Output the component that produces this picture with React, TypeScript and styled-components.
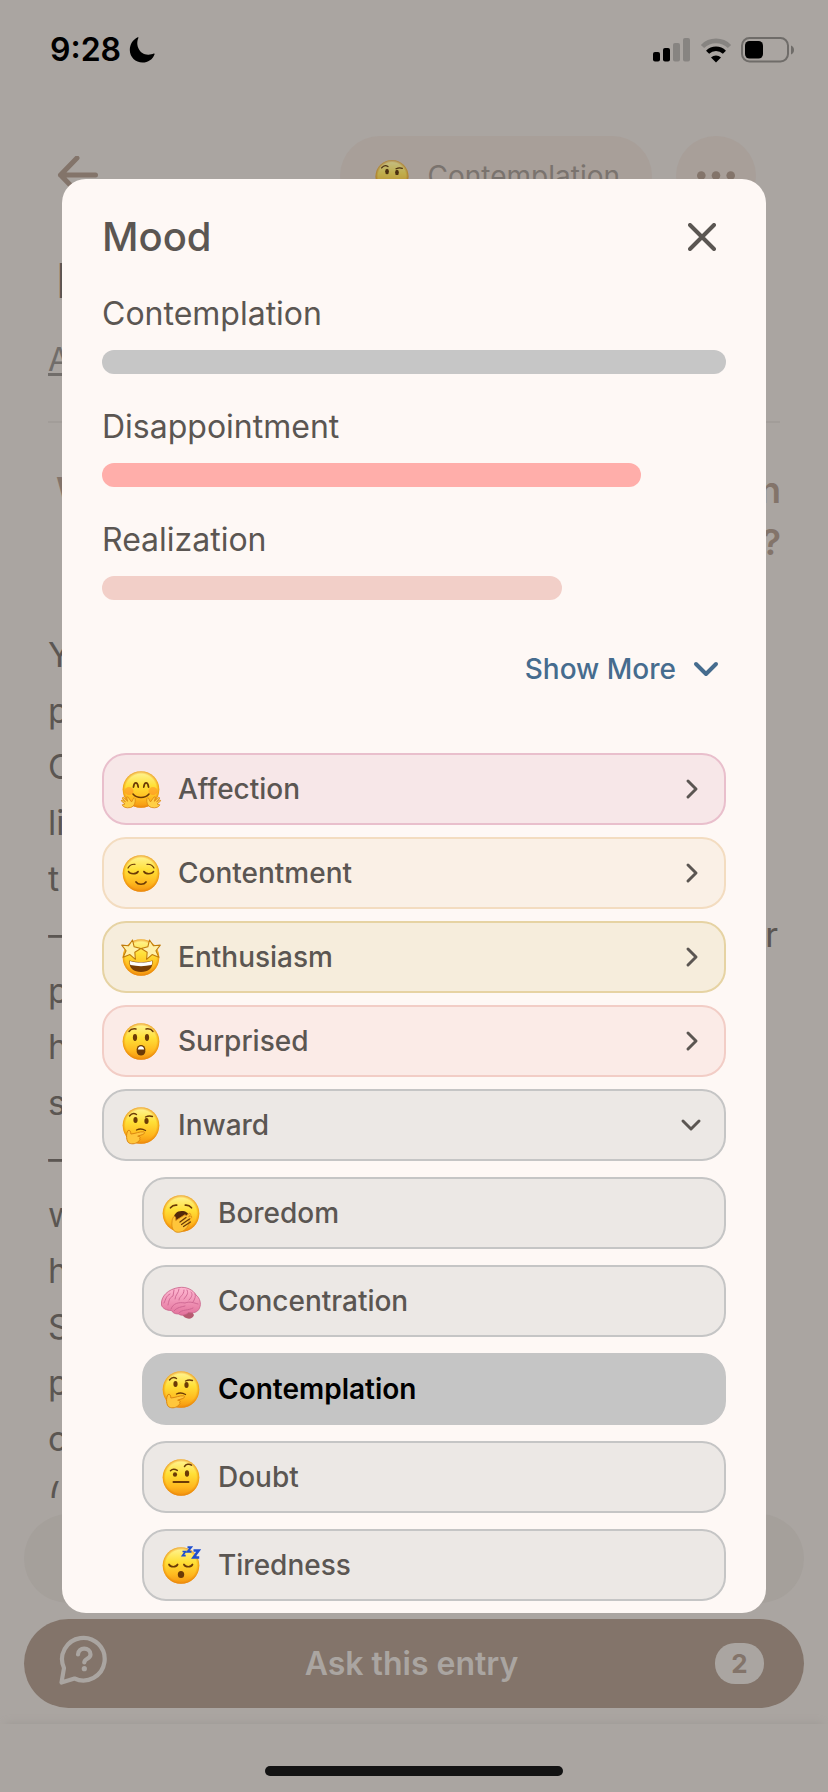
import React, { useId } from "react";
import styled, { createGlobalStyle } from "styled-components";

const color = {
  page: "#aaa5a1",
  ink: "#5b5652",
  brown: "#83746a",
  pill: "#a89f99",
  sheet: "#fef8f5",
  link: "#466c8e",
};

const GlobalStyle = createGlobalStyle`
  * { box-sizing: border-box; }
  body { margin: 0; background: ${color.page}; }
  button { font: inherit; color: inherit; border: 0; background: none; padding: 0; cursor: pointer; }
  svg { display: block; flex: none; }
`;

/* ---------- page behind the dialog ---------- */

const Screen = styled.div`
  position: relative;
  min-height: 100vh;
  font-family: Inter, "Liberation Sans", sans-serif;
  color: ${color.ink};
`;

const Page = styled.div`
  display: flex;
  flex-direction: column;
  height: 100vh;
  background: ${color.page};
`;

const StatusBar = styled.div`
  display: flex;
  align-items: center;
  justify-content: space-between;
  height: 100px;
  padding: 0 34px 0 50px;
  color: #000;
`;

const StatusGroup = styled.div<{ $gap: number }>`
  display: flex;
  align-items: center;
  gap: ${(p) => p.$gap}px;
`;

const Clock = styled.span`
  font-size: 32px;
  font-weight: 600;
  line-height: 40px;
`;

const EntryNav = styled.nav`
  display: flex;
  align-items: center;
  gap: 24px;
  height: 80px;
  margin: 36px 72px 0 56px;
`;

const BackButton = styled.button`
  margin-right: auto;
`;

const MoodPill = styled.button`
  display: flex;
  align-items: center;
  gap: 18px;
  height: 80px;
  padding: 0 32px 0 34px;
  border-radius: 40px;
  background: ${color.pill};
  color: #7a736e;
  font-size: 28px;
`;

const MoreButton = styled.button`
  display: grid;
  place-items: center;
  width: 80px;
  height: 80px;
  border-radius: 40px;
  background: ${color.pill};
`;

const DimmedIcon = styled.span`
  filter: brightness(0.78) saturate(0.75);
`;

const EntryTitle = styled.h1`
  margin: 36px 56px 0;
  font-size: 48px;
  font-weight: 500;
  line-height: 58px;
`;

const EntryLink = styled.a`
  align-self: flex-start;
  margin: 30px 48px 0;
  color: #716d6a;
  font-size: 32px;
  line-height: 40px;
  text-decoration-thickness: 3px;
  text-underline-offset: 2px;
  text-decoration-skip-ink: none;
`;

const Rule = styled.hr`
  width: calc(100% - 96px);
  margin: 41px 48px 0;
  border: 0;
  border-top: 2px solid #a29d99;
`;

const Question = styled.h2`
  display: flex;
  flex-direction: column;
  margin: 41px 47px 59px 56px;
  color: ${color.brown};
  font-size: 36px;
  font-weight: 600;
  line-height: 52px;
`;

const Line = styled.span<{ $end?: boolean }>`
  display: flex;
  justify-content: ${(p) => (p.$end ? "flex-end" : "space-between")};
`;

const EntryBody = styled.p`
  flex: 1;
  min-height: 0;
  overflow: hidden;
  margin: 0 50px 0 48px;
  font-size: 34px;
  line-height: 56px;
`;

const Composer = styled.div`
  flex: none;
  height: 89px;
  margin: 16px 24px;
  border-radius: 45px;
  background: #a5a09b;
`;

const AskButton = styled.button`
  display: grid;
  flex: none;
  grid-template-columns: 49px 1fr 49px;
  align-items: center;
  height: 89px;
  margin: 0 24px;
  padding: 0 40px 0 35px;
  border-radius: 45px;
  background: ${color.brown};
  color: ${color.page};
  font-size: 32px;
  font-weight: 600;
`;

const AskIcon = styled.span`
  align-self: start;
  margin-top: 16px;
`;

const Count = styled.span`
  display: grid;
  place-items: center;
  height: 41px;
  border-radius: 20px;
  background: ${color.page};
  color: ${color.brown};
  font-size: 26px;
  font-weight: 700;
`;

const HomeArea = styled.footer`
  display: flex;
  flex: none;
  justify-content: center;
  align-items: flex-end;
  height: 68px;
  margin-top: 16px;
  padding-bottom: 16px;
  box-shadow: 0 -6px 8px -6px #9d9894;
`;

const HomeIndicator = styled.div`
  width: 36%;
  height: 10px;
  border-radius: 5px;
  background: #131313;
`;

/* ---------- dialog ---------- */

const Overlay = styled.div`
  position: absolute;
  inset: 0;
  padding: 179px 62px;
`;

const Sheet = styled.section`
  padding: 34px 40px 12px;
  border-radius: 24px;
  background: ${color.sheet};
`;

const SheetHeader = styled.header`
  display: flex;
  align-items: center;
  justify-content: space-between;
  height: 48px;
`;

const SheetTitle = styled.h2`
  margin: 0;
  font-size: 40px;
  font-weight: 500;
  line-height: 48px;
`;

const CloseButton = styled.button`
  display: grid;
  place-items: center;
  width: 48px;
  height: 48px;
`;

const Scores = styled.div`
  display: flex;
  flex-direction: column;
  gap: 33px;
  margin-top: 33px;
`;

const Score = styled.div`
  display: flex;
  flex-direction: column;
  gap: 16px;
  font-size: 32px;
  line-height: 40px;
`;

const ScoreBar = styled.div<{ $tone: string }>`
  height: 24px;
  border-radius: 12px;
  background: ${(p) => p.$tone};
`;

const ShowMore = styled.button`
  display: flex;
  align-items: center;
  gap: 16px;
  height: 56px;
  margin: 41px 6px 56px auto;
  color: ${color.link};
  font-size: 28px;
  font-weight: 500;
`;

const OptionList = styled.ul<{ $nested?: boolean }>`
  display: flex;
  flex-direction: column;
  gap: ${(p) => (p.$nested ? 16 : 12)}px;
  margin: ${(p) => (p.$nested ? "16px 0 0 40px" : "0")};
  padding: 0;
  list-style: none;
`;

const Option = styled.button<{ $fill: string; $edge: string; $selected?: boolean }>`
  display: flex;
  align-items: center;
  gap: 17px;
  width: 100%;
  height: 72px;
  padding: 0 21px 0 17px;
  border: 2px solid ${(p) => p.$edge};
  border-radius: 24px;
  background: ${(p) => p.$fill};
  color: ${(p) => (p.$selected ? "#000" : color.ink)};
  font-size: 28px;
  font-weight: ${(p) => (p.$selected ? 600 : 500)};
`;

const OptionName = styled.span`
  flex: 1;
  text-align: left;
`;

/* ---------- emoji ---------- */

type Mood = "hug" | "calm" | "star" | "wow" | "think" | "yawn" | "brain" | "doubt" | "sleep";
const dark = "#6b3a06";

const eye = (cx: number, cy: number, ry = 3) => <ellipse cx={cx} cy={cy} rx="2.1" ry={ry} fill={dark} />;
const stroke = (d: string, w = 1.5, c = dark) => (
  <path d={d} fill="none" stroke={c} strokeWidth={w} strokeLinecap="round" strokeLinejoin="round" />
);
const starPath = "M0-7.2 2.1-2.4 7.2-2 3.3 1.5 4.6 6.6 0 3.8-4.6 6.6-3.3 1.5-7.2-2-2.1-2.4Z";

function features(mood: Mood) {
  switch (mood) {
    case "hug":
      return (
        <>
          <ellipse cx="8" cy="22" rx="4.5" ry="4" fill="#ff6a1c" opacity=".35" />
          <ellipse cx="32" cy="22" rx="4.5" ry="4" fill="#ff6a1c" opacity=".35" />
          {stroke("M12.5 18c.7-5.4 4-5.4 4.7 0M22.8 18c.7-5.4 4-5.4 4.7 0", 1.8)}
          {stroke("M12 25c4 4.6 12 4.6 16 0", 1.6)}
          {[false, true].map((flip) => (
            <g key={String(flip)} transform={flip ? "translate(40 0) scale(-1 1)" : undefined}>
              <path
                d="M9.5 38.5C5 39.5 2 38 1.2 35.8L4 35 .2 31.8l.8-1 3.4 2L1.2 29l1-.9 4.4 4.2-1-4 1.3-.4 3.6 5c1.2-1 1.4-3.8 2.7-4.2 1.4.6 1.2 3.5.6 5.5-.6 2-2 3.7-4.3 4.3Z"
                fill="#ffcf45"
                stroke="#d98510"
                strokeWidth=".8"
              />
            </g>
          ))}
        </>
      );
    case "calm":
      return (
        <>
          {stroke("M7 15c1.3-2.3 4-4 7-3.700M33 15c-1.300-2.300-4-4-7-3.700", 1.2)}
          {stroke("M7.500 18.500c1.500 3 8 3 9.600 0M22.900 18.500c1.600 3 8.100 3 9.600 0", 1.6)}
          {stroke("M15 29c2 3 8 3 10 0", 1.7)}
        </>
      );
    case "star":
      return (
        <>
          <path d="M8.5 23.500c7 2.2 16 2.2 23 0 .8 8-4.5 11.500-11.5 11.5S7.700 31.500 8.500 23.500Z" fill="#7a3f05" />
          <path d="M9 24c7 2 15 2 22 0 .3 1.700.1 3-.5 4-7 1.500-14 1.500-21 0-.6-1-.8-2.300-.5-4Z" fill="#fff" />
          <g fill="#fff0a8" stroke="#c07b0a" strokeWidth=".8" strokeLinejoin="round">
            <path d={starPath} transform="translate(9.800 12.500) rotate(10) scale(1.350)" />
            <path d={starPath} transform="translate(30.200 12.500) rotate(-10) scale(1.350)" />
          </g>
        </>
      );
    case "wow":
      return (
        <>
          {stroke("M8 10.500c1.500-2 4.500-3 7-2.500M32 10.500c-1.500-2-4.500-3-7-2.500", 1.4)}
          {eye(14, 16.5, 3.4)}
          {eye(26, 16.5, 3.4)}
          <rect x="15.700" y="24" width="8.600" height="10.500" rx="4.300" fill={dark} />
          <path d="M16.800 28.500c.5-4.500 5.900-4.500 6.400 0Z" fill="#fff" />
        </>
      );
    case "think":
      return (
        <>
          {stroke("M8.500 11c2-2.600 4.500-3.200 7-1.500M24.500 12c2.500-1.300 4.500-1.500 7-.5", 1.4)}
          {eye(14.5, 15)}
          {eye(25.5, 16)}
          {stroke("M15.500 25c3-1.600 6-1.400 9 .5", 1.4)}
          <path
            d="M7 25.500c1.800-.8 2.700.7 2.900 3.500 4-.2 9-2.700 12.800-2.200 1.600.8.4 2.500-1.500 2.900l-4.500 1.500c2.500 0 3.100 1.300 1.900 2.300.8.9.2 2-.8 2.500-2.300 2.800-6.500 3.500-9.600 2.100C5.300 36.900 4.600 29 7 25.500Z"
            fill="#ffc63c"
            stroke="#dc8710"
            strokeWidth="1"
          />
        </>
      );
    case "yawn":
      return (
        <>
          {stroke("M9.500 14.800c1.500-1.800 4-2.800 6.200-2.600M30.500 14.800c-1.500-1.800-4-2.800-6.200-2.600", 1.7)}
          <path d="M12.500 28c-.5-7 3.500-10 8-10s7 2 7 5l-6 8Z" fill="#54290a" />
          <path
            d="M11 29c0-3 1.500-6 3-5.500 1 .8.500 2.500.8 4l9.200-5.800 1.200 1 3.500-2.600 1 1.300-2.200 2.500 2.900-1 .4 1.500-2.800 2.600.2 3c-1.500 6-7.500 10.500-13.200 9-3.700-1.500-4.500-6-4-10Z"
            fill="#ffc53a"
            stroke="#dc8d13"
            strokeWidth=".9"
          />
          {stroke("M19 29l6-4.500M20.500 31.500l8-5.500M22.500 33.500l7-4.500", 1.3)}
        </>
      );
    case "doubt":
      return (
        <>
          {stroke("M9.500 13.700c1.800-1.800 4.500-1.600 6.800-.3M23.500 9.500c1.500-2.300 4.500-3 7-1.300", 1.5)}
          {eye(14, 17.5, 2.3)}
          {eye(26, 16.5, 3.2)}
          {stroke("M12.500 25h15", 2)}
        </>
      );
    case "sleep":
      return (
        <>
          {stroke("M8 19.500c1.500 3 7 3 8.600 0M22.900 19.500c1.600 3 7.100 3 8.600 0", 1.7)}
          <ellipse cx="20" cy="29.500" rx="3.200" ry="3.500" fill={dark} />
          <g fill="none" stroke="#1f4fd0">
            <path d="M21.500 6.500h3l-3 4.200h3.200" strokeWidth="1.700" />
            <path d="M26.500 2.200h3.700l-3.700 4.600h4" strokeWidth="1.900" />
            <path d="M32.500 5.500h5.200l-5.200 7h5.700" strokeWidth="2.500" />
          </g>
        </>
      );
    default:
      return null;
  }
}

function Emoji({ mood, size = 40 }: { mood: Mood; size?: number }) {
  const id = useId();
  return (
    <svg width={size} height={size} viewBox="0 0 40 40" aria-hidden="true" overflow="visible">
      <defs>
        <linearGradient id={`${id}f`} x1="0" y1="0" x2="0" y2="1">
          <stop offset="0" stopColor="#fff59a" />
          <stop offset=".4" stopColor="#ffe037" />
          <stop offset=".75" stopColor="#ffb91f" />
          <stop offset="1" stopColor="#f3930f" />
        </linearGradient>
        <radialGradient id={`${id}e`}>
          <stop offset=".84" stopColor="#f08c0a" stopOpacity="0" />
          <stop offset="1" stopColor="#e37f08" stopOpacity=".7" />
        </radialGradient>
        <linearGradient id={`${id}b`} x1="0" y1="0" x2="0" y2="1">
          <stop offset="0" stopColor="#ffb9d2" />
          <stop offset="1" stopColor="#e2719b" />
        </linearGradient>
      </defs>
      {mood === "brain" ? (
        <g transform="translate(0 2)">
          <path d="M21 31c2 5 10 7 12 1l-3-5Z" fill="#b65a70" />
          <path
            d="M.5 22C-.5 13.500 7 6 18 4.500c7-1 14 2 17 7.500 4 3 5.500 9 3.500 13-1.500 4.500-7 5.500-11 4.500-3 3-7 3.500-10 1.500-4 0-6-1.500-7-3.500-5 0-9-2-10-5.500Z"
            fill={`url(#${id}b)`}
            stroke="#c86088"
            strokeWidth=".8"
          />
          {stroke(
            "M3 20c2-4 2-7 6-9M7 22c1-4 1-7 5-9l1-6M14 16c0-4 4-6 4-10M18 17c0-4 5-4 5-10M23 16c2-3 5-5 3-9M28 17c3-3 4-6 2-8M32 19c2-3 3-6 2-8M10 26c2-6 8-7 14-6 5-2 9 0 13 1M13 28c3-4 8-4 11-5M18 30c3-4 9-2 14-5",
            0.9,
            "#cc6490"
          )}
        </g>
      ) : (
        <>
          <circle cx="20" cy="20.500" r="18.300" fill={`url(#${id}f)`} />
          <circle cx="20" cy="20.500" r="18.300" fill={`url(#${id}e)`} />
          {features(mood)}
        </>
      )}
    </svg>
  );
}

/* ---------- line icons ---------- */

function Glyph({ w, h, d, width = 3, tone = "currentColor" }: { w: number; h: number; d: string; width?: number; tone?: string }) {
  return (
    <svg width={w} height={h} viewBox={`0 0 ${w} ${h}`} fill="none" stroke={tone} strokeWidth={width} strokeLinecap="round" strokeLinejoin="round" aria-hidden="true">
      <path d={d} />
    </svg>
  );
}

const scores = [
  { name: "Contemplation", value: 100, tone: "#c6c6c6" },
  { name: "Disappointment", value: 86.4, tone: "#ffaeaa" },
  { name: "Realization", value: 73.7, tone: "#f2cfc8" },
];

const groups: { name: string; mood: Mood; fill: string; edge: string; open?: boolean }[] = [
  { name: "Affection", mood: "hug", fill: "#f7e7e8", edge: "#e9bfcc" },
  { name: "Contentment", mood: "calm", fill: "#faf0e6", edge: "#f3dcc0" },
  { name: "Enthusiasm", mood: "star", fill: "#f6eddc", edge: "#e6d3a3" },
  { name: "Surprised", mood: "wow", fill: "#fbebe7", edge: "#f2cdc6" },
  { name: "Inward", mood: "think", fill: "#ece8e5", edge: "#c5c5c5", open: true },
];

const inward: { name: string; mood: Mood; selected?: boolean }[] = [
  { name: "Boredom", mood: "yawn" },
  { name: "Concentration", mood: "brain" },
  { name: "Contemplation", mood: "think", selected: true },
  { name: "Doubt", mood: "doubt" },
  { name: "Tiredness", mood: "sleep" },
];

const bodyLines = ["Y", "p", "C", "li", "t", "—", "p", "h", "s", "—", "w", "h", "S", "p", "o", "("];

export default function App() {
  return (
    <Screen>
      <GlobalStyle />
      <Page>
        <StatusBar>
          <StatusGroup $gap={8}>
            <Clock>9:28</Clock>
            <svg width="26" height="26" viewBox="0 0 26 26" aria-hidden="true">
              <path d="M9.500.8C6 8 10.500 18 19.500 17.700c2 0 3.700-.5 5.300-1.200.6-.2 1 .2.8.800C23.800 22.500 19 25.600 13.500 25.600 6.500 25.600.8 20 .8 13 .8 7.300 4 2.500 8.700.2c.6-.2 1 .1.800.6Z" />
            </svg>
          </StatusGroup>
          <StatusGroup $gap={9}>
            <svg width="38" height="24" viewBox="0 0 38 24" aria-hidden="true">
              <rect x="0" y="14" width="7" height="9.500" rx="2" />
              <rect x="10" y="10" width="7" height="13.500" rx="2" />
              <rect x="20" y="5" width="7" height="18.500" rx="2" fill="#878481" />
              <rect x="30" y="0" width="7" height="23.500" rx="2" fill="#878481" />
            </svg>
            <svg width="32" height="25" viewBox="0 0 32 25" fill="none" aria-hidden="true">
              <path d="M2.500 8.500A19 19 0 0 1 29.500 8.500" stroke="#878481" strokeWidth="4.600" />
              <path d="M7.600 14.200A12 12 0 0 1 24.400 14.200" stroke="#000" strokeWidth="4.400" />
              <path d="M11 19.500A7.500 7.500 0 0 1 21 19.500L16 24.500Z" fill="#000" />
            </svg>
            <svg width="53" height="26" viewBox="0 0 53 26" aria-hidden="true">
              <rect x="1" y="1" width="46" height="23.500" rx="7.500" fill="none" stroke="#6f6c69" strokeWidth="2" />
              <rect x="4" y="4" width="18" height="17.500" rx="4.500" />
              <path d="M50 8.500c4 1.500 4 7.500 0 9Z" fill="#6f6c69" />
            </svg>
          </StatusGroup>
        </StatusBar>

        <EntryNav>
          <BackButton aria-label="Back">
            <Glyph w={44} h={40} d="M39.500 19H4.500M21 2 4.500 19 21 36" width={5} tone={color.brown} />
          </BackButton>
          <MoodPill>
            <DimmedIcon><Emoji mood="think" size={36} /></DimmedIcon>
            Contemplation
          </MoodPill>
          <MoreButton aria-label="More">
            <svg width="40" height="8" viewBox="0 0 40 8" fill={color.brown} overflow="visible" aria-hidden="true">
              <circle cx="5.300" cy="3.500" r="4.300" />
              <circle cx="20" cy="3.500" r="4.300" />
              <circle cx="34.700" cy="3.500" r="4.300" />
            </svg>
          </MoreButton>
        </EntryNav>
        <EntryTitle>I</EntryTitle>
        <EntryLink href="#">A</EntryLink>
        <Rule />
        <Question>
          <Line><span>W</span><span>n</span></Line>
          <Line $end>?</Line>
        </Question>
        <EntryBody>
          {bodyLines.map((text, i) => (
            <Line key={i}>
              <span>{text}</span>
              {i === 5 && <span>r</span>}
            </Line>
          ))}
        </EntryBody>
        <Composer />
        <AskButton>
          <AskIcon>
            <svg width="50" height="50" viewBox="0 0 50 50" fill="none" stroke="currentColor" strokeWidth="4.200" strokeLinecap="round" strokeLinejoin="round" aria-hidden="true">
              <path d="M2.500 47.500 5 33A21.300 21.300 0 1 1 15.500 43.500Z" />
              <path d="M19 19.500c0-8 12.500-7.500 12.500 0 0 4.500-6.200 4-6.200 8" />
              <circle cx="25.300" cy="33.700" r="2.600" fill="currentColor" stroke="none" />
            </svg>
          </AskIcon>
          <span>Ask this entry</span>
          <Count>2</Count>
        </AskButton>
        <HomeArea><HomeIndicator /></HomeArea>
      </Page>

      <Overlay>
        <Sheet role="dialog" aria-labelledby="mood-title">
          <SheetHeader>
            <SheetTitle id="mood-title">Mood</SheetTitle>
            <CloseButton aria-label="Close">
              <Glyph w={28} h={28} d="M2 2 26 26M26 2 2 26" width={4} />
            </CloseButton>
          </SheetHeader>
          <Scores>
            {scores.map((s) => (
              <Score key={s.name}>
                <span>{s.name}</span>
                <ScoreBar $tone={s.tone} style={{ width: `${s.value}%` }} />
              </Score>
            ))}
          </Scores>
          <ShowMore>
            Show More
            <Glyph w={28} h={16} d="M4 3 14 13 24 3" width={4} />
          </ShowMore>
          <OptionList>
            {groups.map((g) => (
              <li key={g.name}>
                <Option $fill={g.fill} $edge={g.edge} aria-expanded={!!g.open}>
                  <Emoji mood={g.mood} />
                  <OptionName>{g.name}</OptionName>
                  <Glyph w={24} h={24} d={g.open ? "M4 8 12 16 20 8" : "M9 4 17 12 9 20"} />
                </Option>
                {g.open && (
                  <OptionList $nested>
                    {inward.map((o) => (
                      <li key={o.name}>
                        <Option $fill={o.selected ? g.edge : g.fill} $edge={g.edge} $selected={o.selected} aria-pressed={!!o.selected}>
                          <Emoji mood={o.mood} />
                          <OptionName>{o.name}</OptionName>
                        </Option>
                      </li>
                    ))}
                  </OptionList>
                )}
              </li>
            ))}
          </OptionList>
        </Sheet>
      </Overlay>
    </Screen>
  );
}
